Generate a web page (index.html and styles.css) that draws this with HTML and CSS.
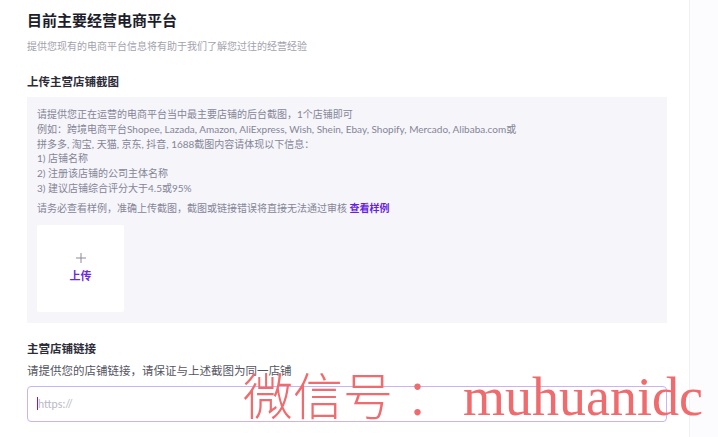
FILE: index.html
```html
<!DOCTYPE html>
<html lang="zh-CN">

<head>
    <meta charset="UTF-8" />
    <title>目前主要经营电商平台</title>
    <meta name="viewport" content="width=device-width, initial-scale=1.0" />
    <link rel="stylesheet" href="styles.css">
</head>

<body>
    <div class="page">
        <main class="panel">
            <h1 class="title">目前主要经营电商平台</h1>
            <p class="subtitle">提供您现有的电商平台信息将有助于我们了解您过往的经营经验</p>

            <h2 class="field-label first">上传主营店铺截图</h2>
            <div class="hint-box">
                <p class="hint">
                    请提供您正在运营的电商平台当中最主要店铺的后台截图，1个店铺即可<br>
                    例如：跨境电商平台Shopee, Lazada, Amazon, AliExpress, Wish, Shein, Ebay, Shopify, Mercado, Alibaba.com或<br>
                    拼多多, 淘宝, 天猫, 京东, 抖音, 1688截图内容请体现以下信息：<br>
                    1) 店铺名称<br>
                    2) 注册该店铺的公司主体名称<br>
                    3) 建议店铺综合评分大于4.5或95%
                </p>
                <p class="hint warn">请务必查看样例，准确上传截图，截图或链接错误将直接无法通过审核 <a class="sample-link" href="#">查看样例</a></p>

                <div class="upload">
                    <svg class="upload-plus" width="10" height="10" viewBox="0 0 10 10">
                        <path d="M5 0 V10 M0 5 H10" stroke="#8a8a96" stroke-width="1" fill="none" />
                    </svg>
                    <span class="upload-text">上传</span>
                </div>
            </div>

            <h2 class="field-label second">主营店铺链接</h2>
            <p class="field-desc">请提供您的店铺链接，请保证与上述截图为同一店铺</p>
            <div class="url-input">
                <span class="caret"></span>
                <span class="placeholder">https://</span>
            </div>
        </main>
        <aside class="side"></aside>
    </div>

    <div class="watermark">
        <span class="wm-cn">微信号</span>
        <span class="wm-colon">：</span>
        <span class="wm-en">muhuanidc</span>
    </div>
</body>

</html>
```

FILE: styles.css
```css
* {
    box-sizing: border-box;
}

body {
    margin: 0;
    font-family: 'Lato', 'Noto Sans CJK SC', sans-serif;
    background: #fff;
    color: #2d2d3a;
    overflow: hidden;
}

.page {
    display: flex;
    min-height: 100vh;
}

.panel {
    width: 690px;
    padding: 10px 22px 0 27px;
    border-right: 1px solid #f0f0f6;
}

.side {
    flex: 1;
    background: #fcfcfe;
}

.title {
    margin: 0;
    font-size: 15px;
    line-height: 20px;
    font-weight: 700;
    color: #1d1d2b;
}

.subtitle {
    margin: 9px 0 0;
    font-size: 10px;
    line-height: 14px;
    color: #a3a3ad;
}

.field-label {
    margin: 0;
    font-size: 11.5px;
    line-height: 16px;
    font-weight: 700;
    color: #2d2d3a;
}

.field-label.first {
    margin-top: 21px;
}

.field-label.second {
    margin-top: 18px;
}

.hint-box {
    margin-top: 7px;
    background: #f5f5fa;
    padding: 10px 10px 11px;
}

.hint {
    margin: 0;
    font-size: 10px;
    line-height: 14.8px;
    color: #858597;
}

.hint.warn {
    margin-top: 5px;
}

.sample-link {
    color: #6a1fe0;
    font-weight: 700;
    text-decoration: none;
}

.upload {
    margin-top: 9px;
    width: 87px;
    height: 87px;
    background: #fff;
    border-radius: 2px;
    display: flex;
    flex-direction: column;
    align-items: center;
    justify-content: center;
    gap: 6px;
}

.upload-plus {
    display: block;
}

.upload-text {
    font-size: 11px;
    line-height: 14px;
    font-weight: 700;
    color: #6c2bd9;
}

.field-desc {
    margin: 6px 0 0;
    font-size: 11.5px;
    line-height: 16px;
    color: #555562;
}

.url-input {
    margin-top: 7px;
    height: 36px;
    border: 1px solid #c9b3f5;
    border-radius: 4px;
    display: flex;
    align-items: center;
    padding-left: 9px;
}

.caret {
    width: 1px;
    height: 13px;
    background: #6a1fe0;
}

.placeholder {
    font-size: 11px;
    color: #b8b8c2;
}

/* watermark over the page */
.watermark {
    position: absolute;
    left: 243px;
    top: 368px;
    display: flex;
    align-items: baseline;
    white-space: nowrap;
    color: #f06b6e;
    pointer-events: none;
}

.wm-cn,
.wm-colon {
    font-family: 'Noto Sans CJK SC', serif;
    font-weight: 300;
    font-size: 50px;
    line-height: 50px;
}

.wm-colon {
    margin-left: 12px;
}

.wm-en {
    font-family: 'Liberation Serif', serif;
    font-size: 54px;
    line-height: 54px;
    margin-left: 8px;
}
```
